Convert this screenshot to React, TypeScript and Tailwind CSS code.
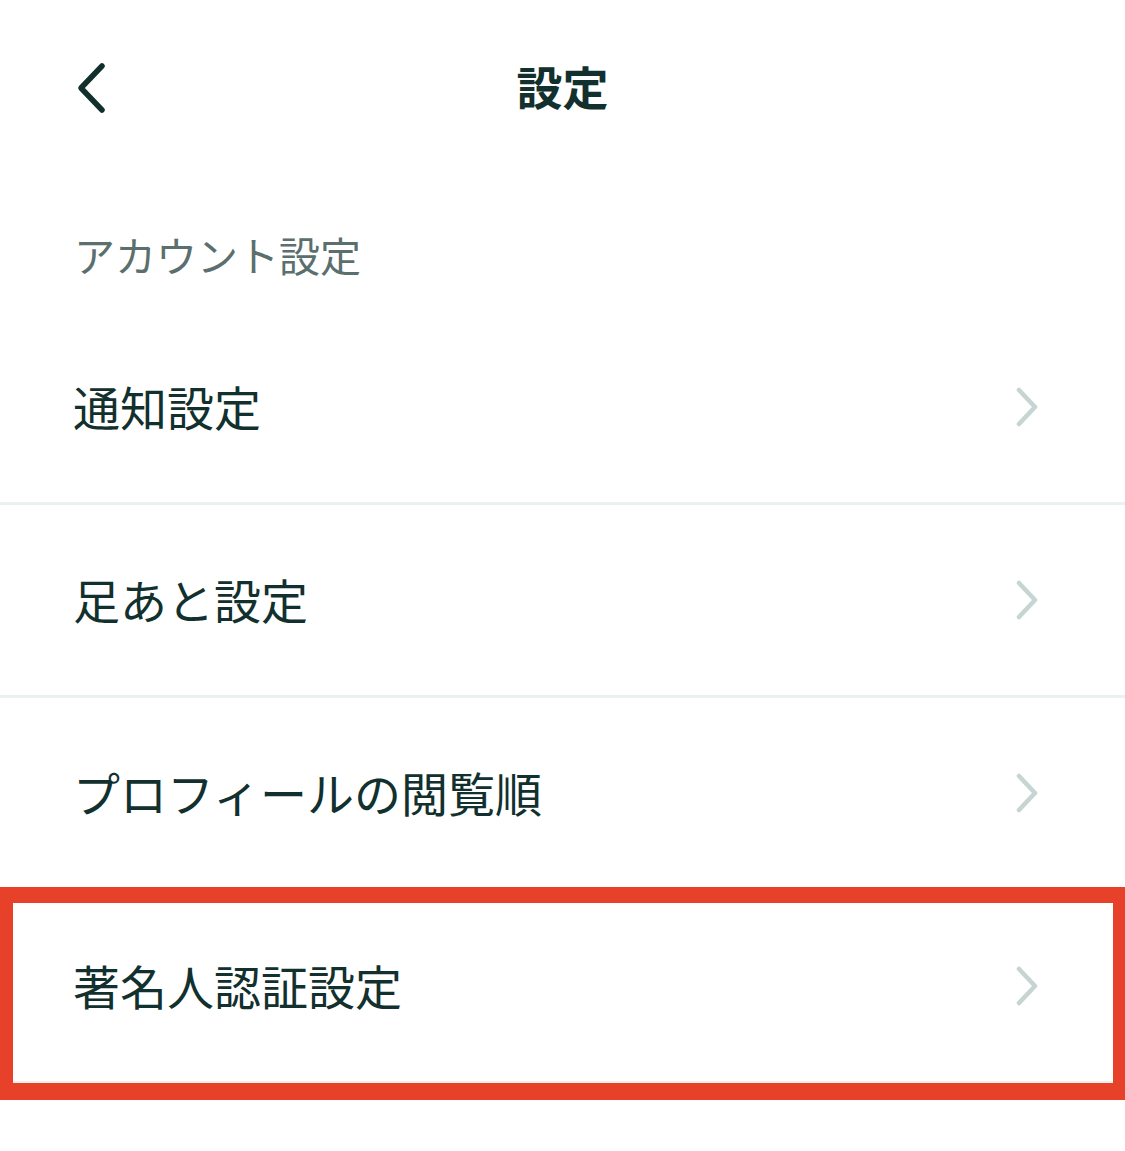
import React from 'react';

const items = ['通知設定', '足あと設定', 'プロフィールの閲覧順', '著名人認証設定'];

function ChevronRight() {
  return (
    <svg width="24" height="40" viewBox="0 0 24 40" fill="none">
      <path d="M4 3 L20 20 L4 37" stroke="#c6d4d3" strokeWidth="4.5" strokeLinecap="round" strokeLinejoin="round" />
    </svg>
  );
}

function ChevronLeft() {
  return (
    <svg width="34" height="52" viewBox="0 0 34 52" fill="none">
      <path d="M28 4 L7 26 L28 48" stroke="#112f2d" strokeWidth="5.5" strokeLinecap="round" strokeLinejoin="round" />
    </svg>
  );
}

export default function App() {
  return (
    <div
      className="w-[1125px] h-[1151px] bg-white text-[#12302e] overflow-hidden"
      style={{ fontFamily: '"Noto Sans CJK JP", "Noto Sans", sans-serif' }}
    >
      {/* Header */}
      <div className="h-[176px] grid grid-cols-[1fr_auto_1fr] items-center">
        <div className="pl-[74px] flex items-center">
          <ChevronLeft />
        </div>
        <h1 className="text-[46px] font-bold leading-none pb-[6px]">設定</h1>
        <div />
      </div>

      {/* Section title */}
      <div className="pl-[74px] h-[136px] pt-[54px] text-[41px] leading-[48px] text-[#5b6f6e]">
        アカウント設定
      </div>

      {/* List */}
      <div className="flex flex-col">
        {items.map((label, i) => (
          <div key={label} className="relative">
            <div className="h-[193px] flex items-center justify-between pl-[73px] pr-[86px] border-b-[3px] border-[#eaf1f0]">
              <span className="text-[47px] leading-none pb-[3px]">{label}</span>
              <ChevronRight />
            </div>
            {i === items.length - 1 && (
              <div className="absolute -top-[4px] left-0 w-[1125px] h-[213px] border-[#e8412a] border-t-[16px] border-l-[13px] border-r-[12px] border-b-[17px]" />
            )}
          </div>
        ))}
      </div>
    </div>
  );
}
